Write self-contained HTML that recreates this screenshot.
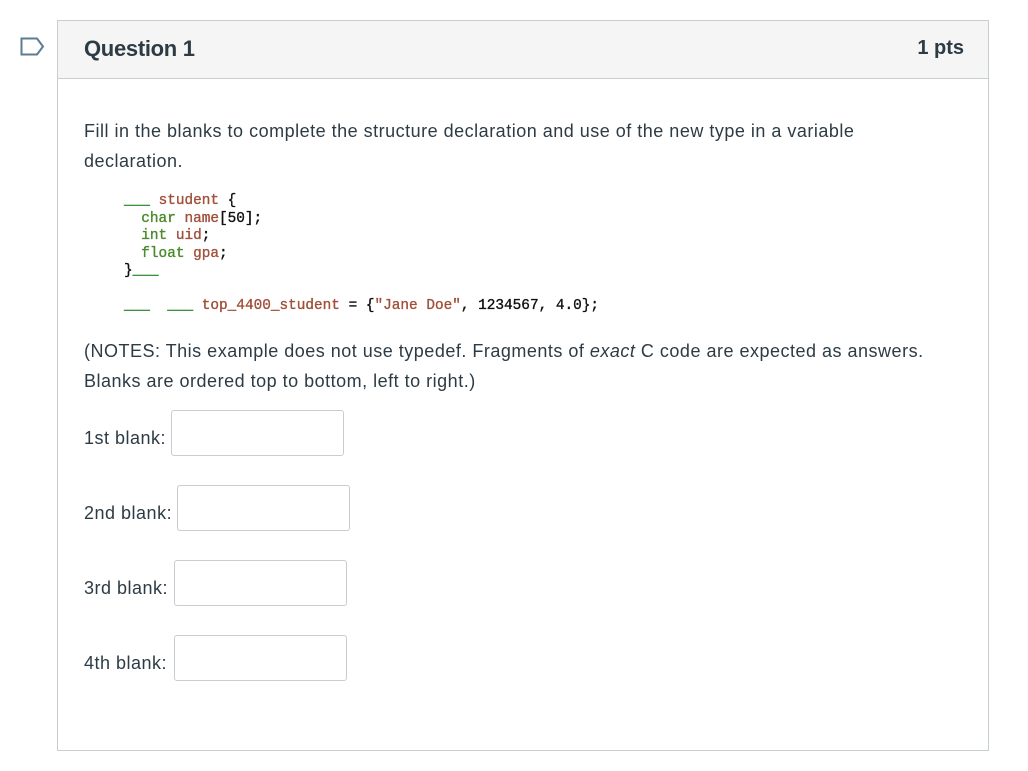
<!DOCTYPE html>
<html><head><style>
body{margin:0;background:#fff;font-family:"Liberation Sans",sans-serif;color:#2d3b45;}
.box{position:absolute;left:57px;top:20px;width:930px;height:729px;border:1px solid #c7cdd1;}
.hdr{height:57px;background:#f5f5f5;border-bottom:1px solid #c7cdd1;position:relative;}
.hdr .t{position:absolute;left:26px;top:15px;font-size:22px;font-weight:bold;color:#2d3b45;letter-spacing:-0.3px}
.hdr .p{position:absolute;right:24px;top:16px;font-size:20px;font-weight:bold;color:#2d3b45}
.txt{position:absolute;left:26px;font-size:18px;letter-spacing:0.5px;line-height:29.5px;color:#2d3b45}
.code{position:absolute;left:66px;top:172px;font-family:"Liberation Mono",monospace;font-size:14.4px;line-height:17.5px;white-space:pre;color:#111;-webkit-text-stroke:0.35px}
.k{color:#4a8a2a}.v{color:#a0503a}.u{color:#2a8a2a}
.lab{position:absolute;left:26px;font-size:18px;letter-spacing:0.5px;color:#2d3b45}
.in{position:absolute;width:170px;height:46px;border:1px solid #c7cdd1;border-radius:3px;box-sizing:border-box}
</style></head><body>
<svg style="position:absolute;left:20px;top:37px" width="26" height="20"><path d="M1.5 1.5H17L23 9.5L17 17.5H1.5Z" fill="none" stroke="#5b7d93" stroke-width="2"/></svg>
<div class="box">
<div class="hdr"><div class="t">Question 1</div><div class="p">1 pts</div></div>
<div class="txt" style="top:96px">Fill in the blanks to complete the structure declaration and use of the new type in a variable<br>declaration.</div>
<div class="code"><span class="u">___</span> <span class="v">student</span> {
  <span class="k">char</span> <span class="v">name</span>[50];
  <span class="k">int</span> <span class="v">uid</span>;
  <span class="k">float</span> <span class="v">gpa</span>;
}<span class="u">___</span>

<span class="u">___</span>  <span class="u">___</span> <span class="v">top_4400_student</span> = {<span class="v">"Jane Doe"</span>, 1234567, 4.0};</div>
<div class="txt" style="top:316px">(NOTES: This example does not use typedef. Fragments of <i>exact</i> C code are expected as answers.<br>Blanks are ordered top to bottom, left to right.)</div>
<div class="lab" style="top:407px">1st blank:</div><div class="in" style="left:113px;top:389px;width:173px"></div>
<div class="lab" style="top:482px">2nd blank:</div><div class="in" style="left:119px;top:464px;width:173px"></div>
<div class="lab" style="top:557px">3rd blank:</div><div class="in" style="left:116px;top:539px;width:173px"></div>
<div class="lab" style="top:632px">4th blank:</div><div class="in" style="left:116px;top:614px;width:173px"></div>
</div>
</body></html>
